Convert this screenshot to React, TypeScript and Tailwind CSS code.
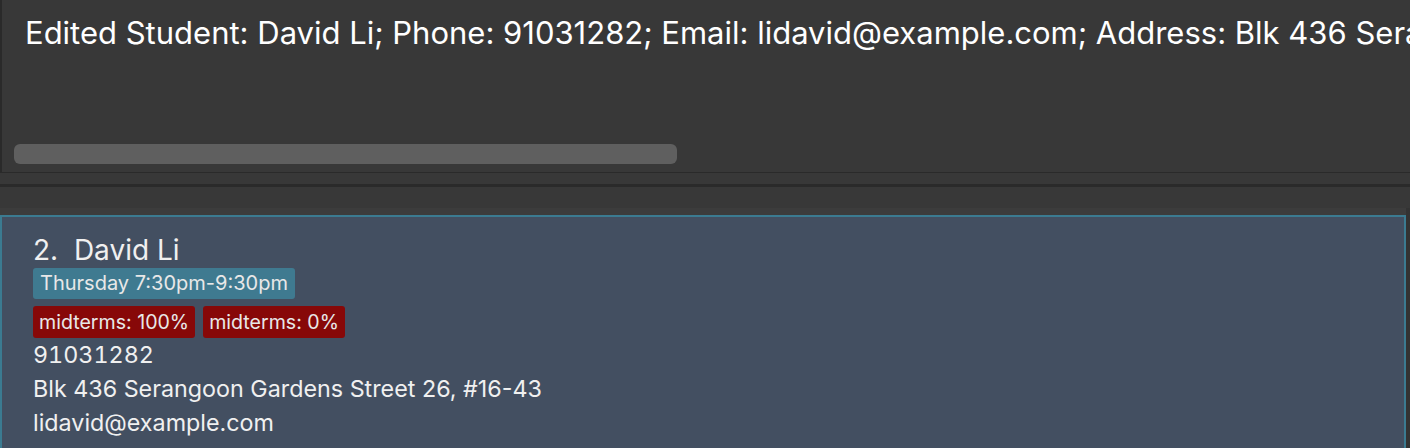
export default function App() {
  const font = { fontFamily: 'Inter, "Noto Sans", sans-serif' };
  return (
    <div className="w-[1410px] h-[448px] overflow-hidden bg-[#383838] flex flex-col" style={font}>
      <div className="h-[173px] shrink-0 border-l-2 border-b border-[#2a2a2a] bg-[#383838] flex flex-col overflow-hidden">
        <div className="pl-[23px] pt-[13px] text-[31px] leading-[40px] text-white whitespace-nowrap">
          Edited Student: David Li; Phone: 91031282; Email: lidavid@example.com; Address: Blk 436 Serangoon Gardens Street 26, #16-43
        </div>
        <div className="flex-1" />
        <div className="pl-[12px] pb-[8px]">
          <div className="w-[663px] h-[20px] rounded-[6px] bg-[#5f5f5f]" />
        </div>
      </div>
      <div className="h-[11px] shrink-0 bg-[#383838]" />
      <div className="h-[3px] shrink-0 bg-[#2a2a2a]" />
      <div className="h-[21px] shrink-0 bg-[#383838]" />
      <div className="shrink-0 flex bg-[#333333]">
        <div className="w-[1406px] flex flex-col">
          <div className="h-[7px] shrink-0 bg-[#3c3c3c]" />
          <div className="h-[280px] border-2 border-[#3b7b91] bg-[#434f61] pl-[31px] pt-[17px] text-white">
            <div className="text-[28px] leading-[32px] text-[#f0f0f0]">
              2.&nbsp;&nbsp;David Li
            </div>
            <div className="mt-[2px] flex">
              <span className="bg-[#3f7a90] rounded-[3px] px-[7px] h-[31px] leading-[31px] text-[20px] text-[#e8e8e8]">
                Thursday 7:30pm-9:30pm
              </span>
            </div>
            <div className="mt-[7px] flex gap-[8px]">
              <span className="bg-[#870808] rounded-[3px] px-[6px] h-[32px] leading-[32px] text-[19.6px] text-[#e8e8e8]">
                midterms: 100%
              </span>
              <span className="bg-[#870808] rounded-[3px] px-[6px] h-[32px] leading-[32px] text-[19.6px] text-[#e8e8e8]">
                midterms: 0%
              </span>
            </div>
            <div className="text-[23.3px] leading-[34px] text-[#f0f0f0] tabular-nums">91031282</div>
            <div className="text-[23.3px] leading-[34px] text-[#f0f0f0]">Blk 436 Serangoon Gardens Street 26, #16-43</div>
            <div className="text-[23.3px] leading-[34px] text-[#f0f0f0]">lidavid@example.com</div>
          </div>
        </div>
      </div>
    </div>
  );
}
